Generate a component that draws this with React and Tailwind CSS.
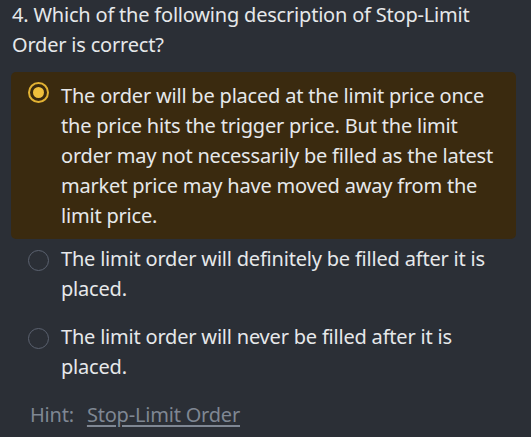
import React, { useState } from 'react'

const options = [
    'The order will be placed at the limit price once the price hits the trigger price. But the limit order may not necessarily be filled as the latest market price may have moved away from the limit price.',
    'The limit order will definitely be filled after it is placed.',
    'The limit order will never be filled after it is placed.',
]

const Radio = ({ checked }) => (
    checked ? (
        <span className="mt-[1px] flex h-[21px] w-[21px] shrink-0 items-center justify-center rounded-full border-2 border-[#e2b233]">
            <span className="h-[11px] w-[11px] rounded-full bg-[#f0c03c]" />
        </span>
    ) : (
        <span className="mt-[6px] h-[21px] w-[21px] shrink-0 rounded-full border-[1.5px] border-[#5b6270]" />
    )
)

const App = () => {
    const [picked, setPicked] = useState(0)

    return (
        <div
            className="h-[437px] w-[531px] overflow-hidden bg-[#2b2f36] text-[20px] leading-[30px] tracking-[-0.2px] text-[#e6e8ea]"
            style={{ fontFamily: '"Noto Sans", "Open Sans", sans-serif' }}
        >
            <h2 className="px-3 font-normal">4. Which of the following description of Stop-Limit Order is correct?</h2>

            <div className="mt-3 flex flex-col">
                {options.map((text, i) => (
                    <div
                        key={i}
                        onClick={() => setPicked(i)}
                        className={
                            picked === i
                                ? 'ml-[11px] mr-[15px] flex gap-3 rounded-[5px] bg-[#3a2a0f] pb-2 pl-[17px] pr-3 pt-[9px]'
                                : i === 1
                                    ? 'ml-[11px] mr-[15px] mt-[5px] flex gap-3 pl-[17px] pr-3'
                                    : 'ml-[11px] mr-[15px] mt-[18px] flex gap-3 pl-[17px] pr-3'
                        }
                    >
                        <Radio checked={picked === i} />
                        <p>{text}</p>
                    </div>
                ))}
            </div>

            <div className="mt-[18px] flex pl-[30px] text-[#7f8793]">
                <span>Hint:</span>
                <a href="#" className="ml-[13px] underline underline-offset-[3px]">Stop-Limit Order</a>
            </div>
        </div>
    )
}

export default App
